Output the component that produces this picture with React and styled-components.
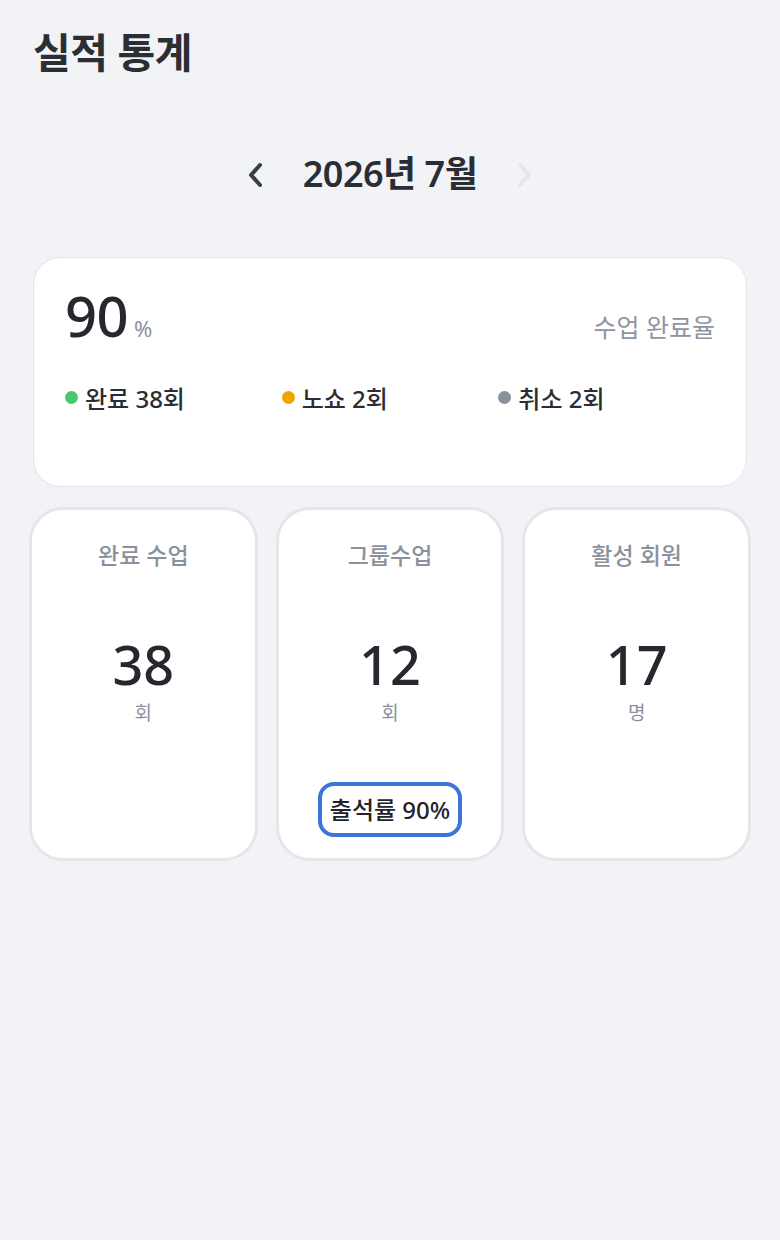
import styled, { createGlobalStyle } from "styled-components";

const GlobalStyle = createGlobalStyle`
  html, body {
    margin: 0;
    padding: 0;
    background: #f2f3f7;
  }

  body {
    font-family: "Noto Sans", "Noto Sans CJK KR", sans-serif;
    color: #2a2d33;
  }
`;

const Page = styled.div`
  min-height: 1240px;
  padding: 26px 29px 0;
  box-sizing: border-box;
`;

const Title = styled.h1`
  margin: 0 0 0 4px;
  font-size: 41px;
  font-weight: 700;
  line-height: 1.3;
  color: #2b2e33;
  letter-spacing: -0.5px;
`;

const MonthNav = styled.div`
  display: flex;
  align-items: center;
  justify-content: center;
  gap: 36px;
  margin-top: 72px;
`;

const NavButton = styled.button`
  display: flex;
  align-items: center;
  justify-content: center;
  padding: 0;
  border: none;
  background: none;
  color: ${({ disabled }) => (disabled ? "#e4e6ea" : "#3a3d45")};
  cursor: ${({ disabled }) => (disabled ? "default" : "pointer")};
`;

const MonthLabel = styled.h2`
  margin: 0;
  font-size: 36px;
  font-weight: 600;
  line-height: 1.3;
  color: #2a2d33;
  letter-spacing: -0.5px;
`;

const RateCard = styled.section`
  margin: 59px 4px 0;
  min-height: 230px;
  box-sizing: border-box;
  padding: 24px 31px 30px;
  background: #fff;
  border: 1px solid #e4e6ea;
  border-radius: 28px;
`;

const RateHeader = styled.div`
  display: flex;
  align-items: baseline;
  justify-content: space-between;
`;

const RateValue = styled.div`
  display: flex;
  align-items: baseline;
  gap: 6px;
`;

const BigNumber = styled.span`
  font-size: 56px;
  font-weight: 500;
  line-height: 1.2;
  color: #25282e;
  letter-spacing: -0.5px;
`;

const Unit = styled.span`
  font-size: 22px;
  color: #8b919c;
`;

const Caption = styled.span`
  font-size: 25px;
  font-weight: 400;
  color: #8e95a0;
`;

const Legend = styled.div`
  display: grid;
  grid-template-columns: repeat(3, 1fr);
  margin-top: 31px;
`;

const LegendItem = styled.div`
  display: flex;
  align-items: center;
  gap: 7px;
  font-size: 24px;
  font-weight: 500;
  color: #2a2d33;
`;

const Dot = styled.span`
  width: 13px;
  height: 13px;
  border-radius: 50%;
  background: ${({ color }) => color};
`;

const StatGrid = styled.div`
  display: grid;
  grid-template-columns: repeat(3, 1fr);
  gap: 18px;
  margin-top: 20px;
`;

const StatCard = styled.div`
  display: flex;
  flex-direction: column;
  align-items: center;
  height: 354px;
  box-sizing: border-box;
  padding: 29px 10px 21px;
  background: #fff;
  border: 3px solid #e4e6ea;
  border-radius: 34px;
`;

const StatLabel = styled.div`
  font-size: 23px;
  font-weight: 500;
  line-height: 1.4;
  color: #8b919c;
`;

const StatNumber = styled.div`
  margin-top: 61px;
  font-size: 54px;
  font-weight: 500;
  line-height: 1.2;
  color: #25282e;
`;

const StatUnit = styled.div`
  margin-top: 4px;
  font-size: 19px;
  line-height: 1.3;
  color: #8b919c;
`;

const Badge = styled.div`
  margin-top: auto;
  padding: 8px 8px;
  border: 4px solid #3b74db;
  border-radius: 16px;
  font-size: 24px;
  font-weight: 500;
  line-height: 1.3;
  color: #222429;
  white-space: nowrap;
`;

const Chevron = ({ dir }) => (
  <svg width="22" height="28" viewBox="0 0 22 28" fill="none">
    <polyline
      points={dir === "left" ? "15,4 6,14 15,24" : "7,4 16,14 7,24"}
      stroke="currentColor"
      strokeWidth="4"
      strokeLinecap="round"
      strokeLinejoin="round"
    />
  </svg>
);

const legend = [
  { label: "완료 38회", color: "#4cc66e" },
  { label: "노쇼 2회", color: "#f0a500" },
  { label: "취소 2회", color: "#8b919c" },
];

const stats = [
  { label: "완료 수업", value: 38, unit: "회" },
  { label: "그룹수업", value: 12, unit: "회", badge: "출석률 90%" },
  { label: "활성 회원", value: 17, unit: "명" },
];

export default function App() {
  return (
    <>
      <GlobalStyle />
      <Page>
        <Title>실적 통계</Title>

        <MonthNav>
          <NavButton aria-label="이전 달">
            <Chevron dir="left" />
          </NavButton>
          <MonthLabel>2026년 7월</MonthLabel>
          <NavButton aria-label="다음 달" disabled>
            <Chevron dir="right" />
          </NavButton>
        </MonthNav>

        <RateCard>
          <RateHeader>
            <RateValue>
              <BigNumber>90</BigNumber>
              <Unit>%</Unit>
            </RateValue>
            <Caption>수업 완료율</Caption>
          </RateHeader>
          <Legend>
            {legend.map((item) => (
              <LegendItem key={item.label}>
                <Dot color={item.color} />
                {item.label}
              </LegendItem>
            ))}
          </Legend>
        </RateCard>

        <StatGrid>
          {stats.map((stat) => (
            <StatCard key={stat.label}>
              <StatLabel>{stat.label}</StatLabel>
              <StatNumber>{stat.value}</StatNumber>
              <StatUnit>{stat.unit}</StatUnit>
              {stat.badge && <Badge>{stat.badge}</Badge>}
            </StatCard>
          ))}
        </StatGrid>
      </Page>
    </>
  );
}
